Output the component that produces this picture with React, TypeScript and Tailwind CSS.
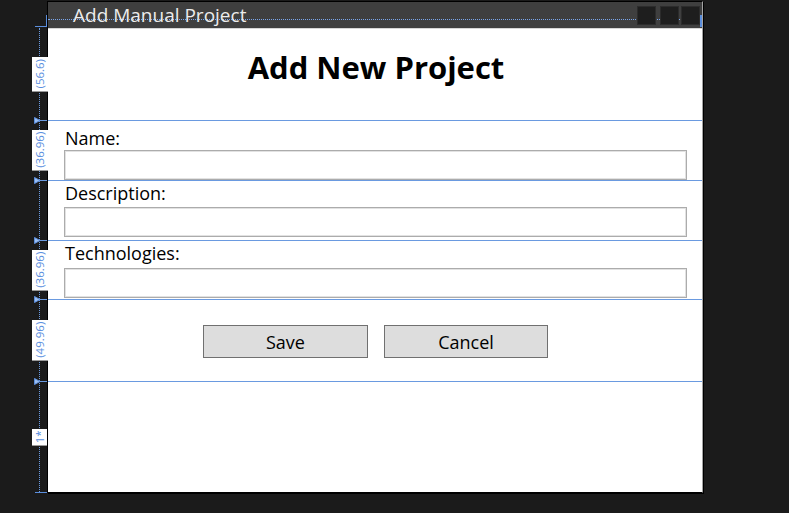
import React from "react";

const rails = [
  { h: "h-[92px]", label: "(56.6)", box: "h-[34px]", line: false },
  { h: "h-[60px]", label: "(36.96)", box: "h-[40px]", line: true },
  { h: "h-[60px]", label: "", box: "", line: true },
  { h: "h-[59px]", label: "(36.96)", box: "h-[40px]", line: true },
  { h: "h-[82px]", label: "(49.96)", box: "h-[40px]", line: true },
  { h: "h-[111px]", label: "1*", box: "h-[16px]", line: true },
];

function Marker() {
  return (
    <svg
      className="absolute left-[34px] -top-[3px]"
      width="7"
      height="7"
      viewBox="0 0 7 7"
    >
      <path d="M0.5 0.5 L6 3.5 L0.5 6.5 Z" fill="#9dbff0" stroke="#5b8edc" strokeWidth="1" />
    </svg>
  );
}

function Rail() {
  return (
    <div className="flex flex-col w-[47px] shrink-0">
      {/* corner adorner */}
      <div className="relative h-[28px]">
        <div className="absolute left-[35px] top-[26px] w-[12px] h-px bg-[#5b8edc]" />
        <div className="absolute left-[46px] top-[15px] w-px h-[12px] bg-[#5b8edc]" />
      </div>
      {rails.map((r, i) => (
        <div key={i} className={`relative ${r.h}`}>
          <div className="absolute left-[39px] top-0 bottom-0 border-l border-dotted border-[#6a9ae0]" />
          {r.line && (
            <>
              <div className="absolute left-[40px] right-0 top-0 h-px bg-[#6a9ae0]" />
              <Marker />
            </>
          )}
          {r.label && (
            <div className="absolute inset-0 flex items-center">
              <div
                className={`ml-[32px] w-[16px] ${r.box} bg-white shadow-[0_1px_0_#9a9a9a] flex items-center justify-center`}
              >
                <span className="-rotate-90 whitespace-nowrap text-[11.5px] leading-none text-[#5a8fe0]">
                  {r.label}
                </span>
              </div>
            </div>
          )}
        </div>
      ))}
      <div className="ml-[35px] w-[12px] h-px bg-[#5b8edc]" />
    </div>
  );
}

function Field({
  label,
  rowH,
  labelTop,
  inputTop,
}: {
  label: string;
  rowH: string;
  labelTop: string;
  inputTop: string;
}) {
  return (
    <div className={`${rowH} border-t border-[#6a9ae0] pl-[16px] pr-[15px] flex flex-col`}>
      <div className={`${labelTop} text-[18px] leading-[20px] pl-px text-black`}>{label}</div>
      <div
        className={`${inputTop} h-[30px] border border-[#acacac] bg-white shadow-[inset_0_0_0_1px_#e2e2e2]`}
      />
    </div>
  );
}

export default function App() {
  return (
    <div className="w-[789px] h-[513px] bg-[#1b1b1b] flex items-start font-['Open_Sans',sans-serif] overflow-hidden">
      <Rail />

      {/* designer window */}
      <div className="mt-[1px] w-[656px] border-t border-l border-b border-black border-r border-r-[#a3a3a3] shadow-[1px_1px_0_#000] flex flex-col">
        {/* title bar */}
        <div className="relative h-[26px] bg-[#3f3f3f] flex items-center justify-between">
          <div className="absolute left-0 right-[2px] top-[17px] border-t border-dotted border-[#7aa6ec]" />
          <div className="absolute right-0 top-[13px] w-[2px] h-[12px] bg-[#5b8edc]" />
          <span className="relative pl-[25px] text-[19px] leading-[26px] text-[#ececec]">
            Add Manual Project
          </span>
          <div className="relative flex pr-[2px]">
            <div className="w-[19px] h-[19px] bg-[#1e1e1e] border border-[#2c2c2c]" />
            <div className="ml-[4px] w-[19px] h-[19px] bg-[#1e1e1e] border border-[#2c2c2c]" />
            <div className="ml-[2px] w-[19px] h-[19px] bg-[#1e1e1e] border border-[#2c2c2c]" />
          </div>
        </div>

        <div className="bg-white flex flex-col">
          <div className="h-[92px] border-t border-[#d6d6d6] flex justify-center pt-[20px] pl-[2px]">
            <h1 className="text-[31px] leading-[36px] font-bold text-black">Add New Project</h1>
          </div>

          <Field label="Name:" rowH="h-[60px]" labelTop="mt-[7px]" inputTop="mt-[2px]" />
          <Field label="Description:" rowH="h-[60px]" labelTop="mt-[2px]" inputTop="mt-[4px]" />
          <Field label="Technologies:" rowH="h-[59px]" labelTop="mt-[2px]" inputTop="mt-[5px]" />

          <div className="h-[82px] border-t border-[#6a9ae0] flex justify-center gap-4 pt-[25px] pl-px">
            <button className="w-[165px] h-[33px] border border-[#707070] bg-[#dddddd] text-[18px] leading-none text-black">
              Save
            </button>
            <button className="w-[164px] h-[33px] border border-[#707070] bg-[#dddddd] text-[18px] leading-none text-black">
              Cancel
            </button>
          </div>

          <div className="h-[111px] border-t border-[#6a9ae0]" />
        </div>
      </div>
    </div>
  );
}
